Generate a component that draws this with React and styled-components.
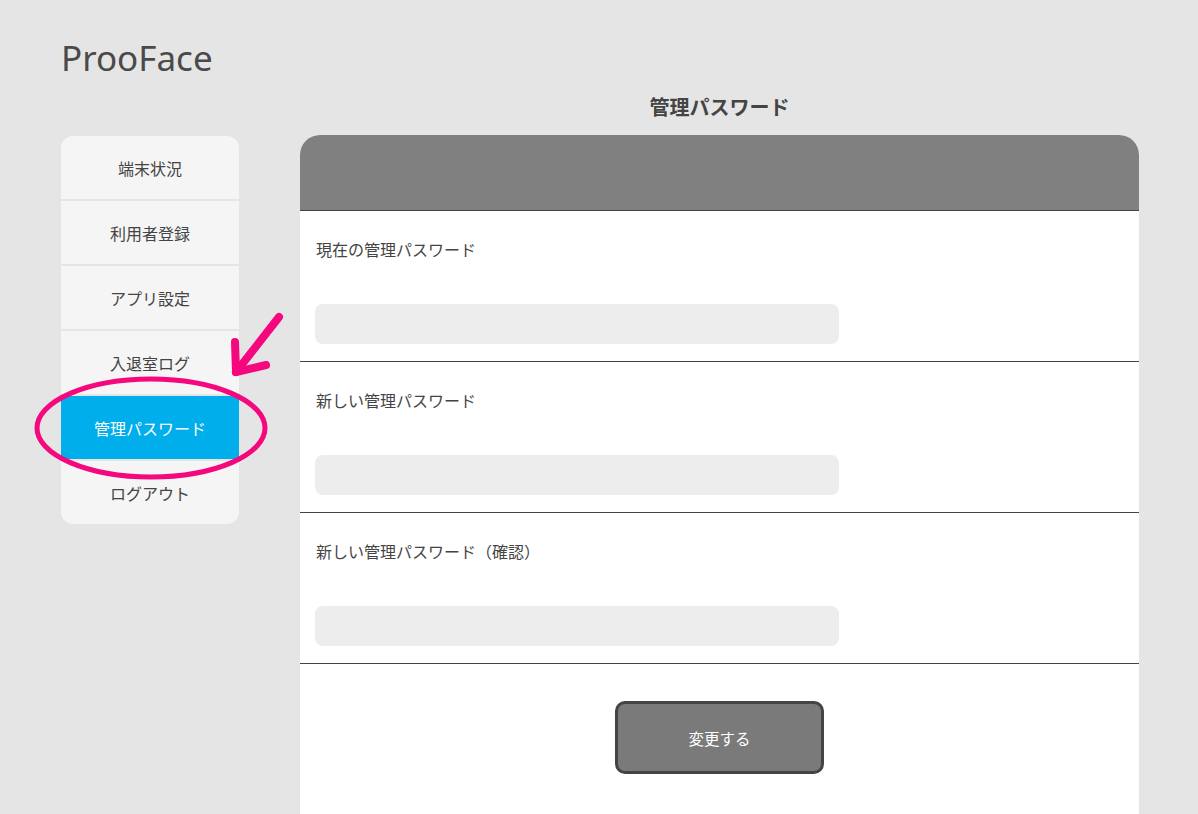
import React from "react";
import styled, { createGlobalStyle } from "styled-components";

const GlobalStyle = createGlobalStyle`
  html, body {
    margin: 0;
    padding: 0;
    background: #e5e5e5;
  }
  body {
    font-family: "Noto Sans", "Noto Sans CJK JP", sans-serif;
    color: #444;
  }
`;

const Page = styled.div`
  position: relative;
  min-height: 814px;
  padding: 0 59px 0 61px;
  box-sizing: border-box;
`;

const Logo = styled.h1`
  margin: 0;
  height: 90px;
  padding-top: 40px;
  box-sizing: border-box;
  font-family: "Noto Sans", sans-serif;
  font-weight: 400;
  font-size: 35px;
  line-height: 1;
  color: #4a4a4a;
`;

const Row = styled.div`
  display: flex;
  align-items: flex-start;
  gap: 61px;
`;

const Sidebar = styled.nav`
  width: 178px;
  flex-shrink: 0;
  margin-top: 46px;
  display: flex;
  flex-direction: column;
  gap: 2px;
  background: #e5e5e5;
  border-radius: 12px;
  overflow: hidden;
`;

const NavItem = styled.div`
  height: 63px;
  display: flex;
  align-items: center;
  justify-content: center;
  font-family: "Noto Sans CJK JP", sans-serif;
  font-size: 16px;
  background: ${(p) => (p.active ? "#00aeeb" : "#f5f5f5")};
  color: ${(p) => (p.active ? "#fff" : "#444")};
`;

const Main = styled.main`
  flex: 1;
  display: flex;
  flex-direction: column;
`;

const Title = styled.h2`
  margin: 0;
  height: 45px;
  padding-top: 3px;
  box-sizing: border-box;
  text-align: center;
  font-family: "Noto Sans CJK JP", sans-serif;
  font-size: 20px;
  line-height: 28px;
  font-weight: 700;
  color: #444;
`;

const Card = styled.section`
  background: #fff;
  border-radius: 20px 20px 0 0;
  overflow: hidden;
  height: 700px;
`;

const CardHeader = styled.div`
  height: 75px;
  background: #808080;
  border-bottom: 1px solid #444;
`;

const Field = styled.div`
  height: 151px;
  box-sizing: border-box;
  padding: 27px 17px 0 15px;
  border-bottom: 1px solid #444;
  display: flex;
  flex-direction: column;
`;

const Label = styled.label`
  font-family: "Noto Sans CJK JP", sans-serif;
  font-size: 16px;
  line-height: 22px;
  padding-left: 1px;
  color: #444;
`;

const Input = styled.input`
  margin-top: 44px;
  width: 524px;
  height: 40px;
  box-sizing: border-box;
  border: none;
  outline: none;
  border-radius: 8px;
  background: #ededed;
`;

const Actions = styled.div`
  display: flex;
  justify-content: center;
  padding-top: 37px;
`;

const Button = styled.button`
  width: 209px;
  height: 73px;
  background: #7a7a7a;
  border: 3px solid #444;
  border-radius: 10px;
  color: #fff;
  font-family: "Noto Sans CJK JP", sans-serif;
  font-size: 15.5px;
  cursor: pointer;
`;

const Annotation = styled.svg`
  position: absolute;
  left: 0;
  top: 0;
  pointer-events: none;
`;

const items = ["端末状況", "利用者登録", "アプリ設定", "入退室ログ", "管理パスワード", "ログアウト"];
const fields = ["現在の管理パスワード", "新しい管理パスワード", "新しい管理パスワード（確認）"];

const App = () => {
  return (
    <>
      <GlobalStyle />
      <Page>
        <Logo>ProoFace</Logo>
        <Row>
          <Sidebar>
            {items.map((t) => (
              <NavItem key={t} active={t === "管理パスワード"}>
                {t}
              </NavItem>
            ))}
          </Sidebar>
          <Main>
            <Title>管理パスワード</Title>
            <Card>
              <CardHeader />
              {fields.map((f) => (
                <Field key={f}>
                  <Label>{f}</Label>
                  <Input type="password" />
                </Field>
              ))}
              <Actions>
                <Button>変更する</Button>
              </Actions>
            </Card>
          </Main>
        </Row>
        {/* pink highlight drawn over the menu */}
        <Annotation width="320" height="500" viewBox="0 0 320 500">
          <ellipse
            cx="151"
            cy="428"
            rx="114"
            ry="49"
            fill="none"
            stroke="#f5077e"
            strokeWidth="5"
          />
          <g stroke="#f5077e" strokeWidth="8" strokeLinecap="round" fill="none">
            <line x1="279" y1="317" x2="236" y2="372" />
            <line x1="236" y1="372" x2="235" y2="342" />
            <line x1="236" y1="372" x2="266" y2="365" />
          </g>
        </Annotation>
      </Page>
    </>
  );
};

export default App;
